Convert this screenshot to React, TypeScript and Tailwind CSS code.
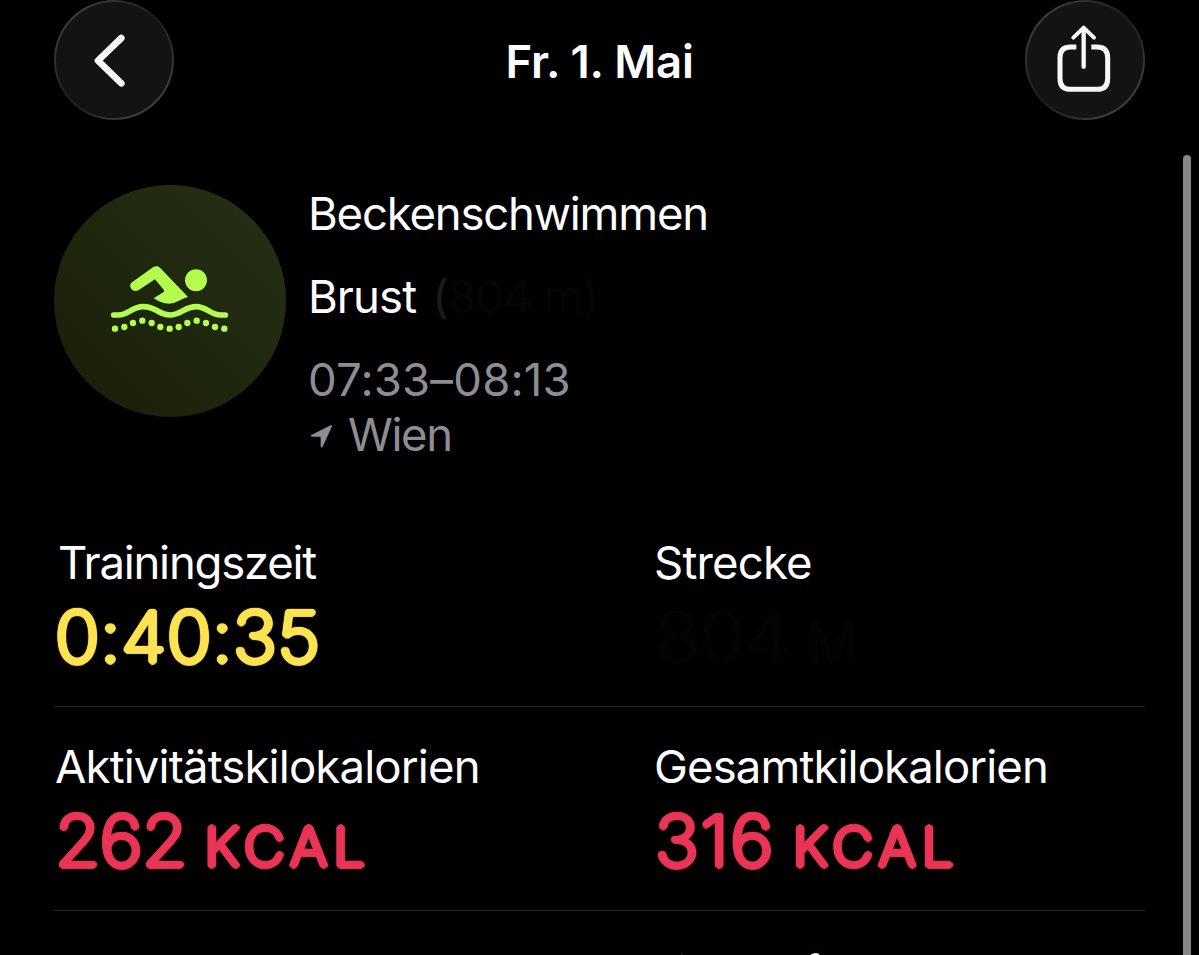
import type { ReactNode } from "react";

interface Stat {
  label: string;
  labelClass: string;
  value: string;
  valueClass: string;
  unit?: string;
}

const rows: Stat[][] = [
  [
    {
      label: "Trainingszeit",
      labelClass: "pl-[4px] tracking-[-1.25px]",
      value: "0:40:35",
      valueClass: "text-[#fde351] tracking-[0.7px]",
    },
    {
      label: "Strecke",
      labelClass: "tracking-[-0.8px]",
      value: "804",
      valueClass: "text-[#040404]",
      unit: "M",
    },
  ],
  [
    {
      label: "Aktivitätskilokalorien",
      labelClass: "pl-px tracking-[-0.85px]",
      value: "262",
      valueClass: "text-[#ea3556] tracking-[-0.6px]",
      unit: "KCAL",
    },
    {
      label: "Gesamtkilokalorien",
      labelClass: "tracking-[-0.9px]",
      value: "316",
      valueClass: "text-[#ea3556] tracking-[1.8px]",
      unit: "KCAL",
    },
  ],
];

const dots = [
  [75, 266],
  [103, 261],
  [129, 249],
  [157, 242],
  [185, 249],
  [211, 261],
  [239, 266],
  [266, 261],
  [292, 249],
  [320, 242],
  [348, 249],
  [375, 261],
  [403, 266],
];

// thickens a thin font evenly so that the stroke ends come out round
function roundStroke(radius: number) {
  const count = 12;
  const shadows: string[] = [];
  for (let i = 0; i < count; i++) {
    const a = (i / count) * Math.PI * 2;
    shadows.push(
      `${(Math.cos(a) * radius).toFixed(2)}px ${(Math.sin(a) * radius).toFixed(2)}px 0.8px currentColor`
    );
  }
  return shadows.join(", ");
}

export default function App() {
  return (
    <div className="relative h-[955px] w-[1199px] overflow-hidden bg-black pl-[54px] pr-[54px] font-['Inter',sans-serif] text-[45.5px] text-white">
      <header className="flex h-[120px] items-center justify-between">
        <RoundButton label="Zurück">
          <path d="M246 114 L176 182 L246 250" strokeWidth="20" strokeLinecap="round" />
        </RoundButton>
        <h1 className="pt-[3px] text-[45.5px] font-semibold leading-[56px] tracking-[-0.2px]">
          Fr. 1. Mai
        </h1>
        <RoundButton label="Teilen">
          <path
            d="M198 141 H181 Q149 141 149 173 V236 Q149 268 181 268 H260 Q292 268 292 236 V173 Q292 141 260 141 H243"
            strokeWidth="15"
          />
          <path d="M220 86 V200" strokeWidth="13" strokeLinecap="round" />
          <path d="M189 113 L220 83 L251 113" strokeWidth="12" strokeLinecap="round" />
        </RoundButton>
      </header>

      <section className="mt-[65px] flex h-[318px] items-start">
        <div className="flex size-[232px] items-center justify-center rounded-full bg-linear-to-tr from-[#191d08] to-[#263116]">
          <SwimIcon />
        </div>
        <div className="ml-[22px] pt-px leading-[55px]">
          <p className="mb-[28px] tracking-[-1.2px]">Beckenschwimmen</p>
          <p className="mb-[28px] flex tracking-[-0.9px]">
            Brust
            <span className="ml-[16px] text-[#1b1b1b]">(</span>
            <span className="text-[#050505]">804 m)</span>
          </p>
          <p className="tracking-[0.2px] text-[#8e8d93]">07:33–08:13</p>
          <p className="flex items-center gap-[14px] tracking-[-1.4px] text-[#8e8d93]">
            <svg
              className="ml-[2px] mt-[3px]"
              width="24"
              height="24"
              viewBox="60 732 72 72"
              fill="currentColor"
            >
              <path d="M64 765 L122 736 Q127 734 126 739 L98 800 Q94 806 92 799 V773 Q92 770 89 770 L66 770 Q60 768 64 765Z" />
            </svg>
            Wien
          </p>
        </div>
      </section>

      <main>
        {rows.map((row) => (
          <div
            key={row[0].label}
            className="grid grid-cols-[600px_1fr] border-b border-[#242424] pb-[23px] pt-[32px]"
          >
            {row.map((stat) => (
              <StatCell key={stat.label} stat={stat} />
            ))}
          </div>
        ))}
        <div className="grid grid-cols-[600px_1fr] pt-[33px]">
          <p className="col-start-2 leading-[56px] tracking-[-0.2px]">Ø Herzfrequenz</p>
        </div>
      </main>

      {/* scroll indicator */}
      <div className="absolute bottom-0 right-[8px] top-[155px] w-[8px] rounded-t-full bg-[#868686]" />
    </div>
  );
}

function StatCell({ stat }: { stat: Stat }) {
  return (
    <div>
      <p className={`leading-[56px] ${stat.labelClass}`}>{stat.label}</p>
      <p
        className={`flex h-[92px] origin-left scale-x-[1.05] items-baseline pl-px text-[70px] font-extralight leading-[91px] ${stat.valueClass}`}
        style={{ textShadow: roundStroke(2.5) }}
      >
        {stat.value}
        {stat.unit && (
          <span
            className="ml-[17px] text-[53.5px] leading-none tracking-[6px]"
            style={{ textShadow: roundStroke(2.8) }}
          >
            {stat.unit}
          </span>
        )}
      </p>
    </div>
  );
}

function RoundButton({ label, children }: { label: string; children: ReactNode }) {
  return (
    <button
      aria-label={label}
      className="size-[120px] rounded-full bg-linear-135 from-[#484848] via-[#1c1c1c] to-[#505050] p-[2px]"
    >
      <span className="flex size-full items-center justify-center rounded-full bg-[#131313]">
        <svg
          className="size-[120px] shrink-0"
          viewBox="44 0 360 360"
          fill="none"
          stroke="#f7f7f7"
          strokeLinejoin="round"
        >
          {children}
        </svg>
      </span>
    </button>
  );
}

function SwimIcon() {
  return (
    <svg width="160" height="110" viewBox="0 18 480 330" fill="#b4fd4f">
      <circle cx="318" cy="121" r="33" />
      <path d="M126 127 L189 82 Q200 75 210 83 L294 171 Q282 173 270 181 Q238 200 207 184 L191 175 L221 156 Q224 153 221 149 L195 118 L145 151 Q132 157 124 147 Q116 134 126 127Z" />
      <path
        d="M71 225 H85 C115 225 125 200 160 200 C200 200 205 225 240 225 C275 225 282 200 319 200 C350 200 362 225 392 225 H406"
        fill="none"
        stroke="#b4fd4f"
        strokeWidth="17"
        strokeLinecap="round"
      />
      {dots.map(([x, y]) => (
        <circle key={x} cx={x} cy={y} r="9.5" />
      ))}
    </svg>
  );
}
